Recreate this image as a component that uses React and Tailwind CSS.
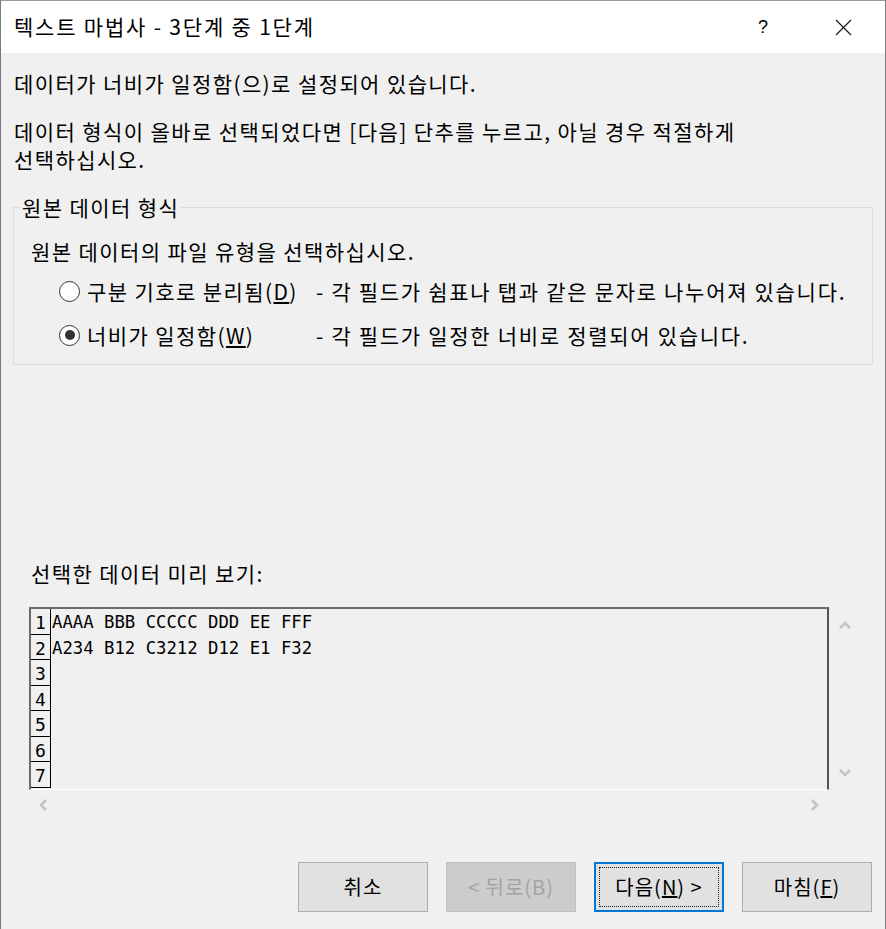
import React from 'react';

// Text Import Wizard - step 1 of 3

const KR = { fontFamily: '"Noto Sans CJK KR", "Noto Sans", sans-serif' };

function Radio({ checked }) {
  return (
    <span className="w-[21px] h-[21px] rounded-full border-[1.5px] border-[#333] bg-white flex items-center justify-center shrink-0">
      {checked && <span className="w-[10px] h-[10px] rounded-full bg-[#333]" />}
    </span>
  );
}

function Chevron({ dir }) {
  const paths = {
    up: 'M2 9 L7 4 L12 9',
    down: 'M2 4 L7 9 L12 4',
    left: 'M9 2 L4 7 L9 12',
    right: 'M5 2 L10 7 L5 12',
  };
  return (
    <svg width="14" height="14" viewBox="0 0 14 14">
      <path d={paths[dir]} fill="none" stroke="#c4c4c4" strokeWidth="2.6" />
    </svg>
  );
}

function Btn({ children, disabled, focused }) {
  if (focused) {
    return (
      <button className="w-[130px] h-[50px] border-2 border-[#0078d7] bg-[#e1e1e1] p-[3px] text-[20px] tracking-[1px] text-black">
        <span className="w-full h-full flex items-center justify-center border border-dotted border-[#222]">
          {children}
        </span>
      </button>
    );
  }
  return (
    <button
      className={
        disabled
          ? 'w-[130px] h-[50px] border border-[#bfbfbf] bg-[#cccccc] text-[20px] tracking-[1px] text-[#a3a3a3]'
          : 'w-[130px] h-[50px] border border-[#adadad] bg-[#e1e1e1] text-[20px] tracking-[1px] text-black'
      }
    >
      {children}
    </button>
  );
}

const rows = ['AAAA BBB CCCCC DDD EE FFF', 'A234 B12 C3212 D12 E1 F32', '', '', '', '', ''];

export default function App() {
  return (
    <div
      className="w-[886px] h-[929px] bg-[#f0f0f0] border-x border-[#7a7a7a] flex flex-col text-black"
      style={KR}
    >
      {/* title bar */}
      <div className="h-[53px] bg-white border-t border-[#9a9a9a] flex items-center pl-[13px] shrink-0">
        <span className="text-[21px] tracking-[1.8px]">텍스트 마법사 - 3단계 중 1단계</span>
        <span className="ml-auto text-[18px] mr-[67px]" style={{ fontFamily: '"Liberation Sans", sans-serif' }}>?</span>
        <svg width="17" height="17" viewBox="0 0 17 17" className="mr-[33px]">
          <path d="M1 1 L16 16 M16 1 L1 16" stroke="#111" strokeWidth="1.1" />
        </svg>
      </div>

      {/* intro text */}
      <div className="pl-[13px] pt-[16px] text-[21px] tracking-[1.4px] leading-[28px]">
        <p>데이터가 너비가 일정함(으)로 설정되어 있습니다.</p>
        <p className="mt-[20px]">
          데이터 형식이 올바로 선택되었다면 [다음] 단추를 누르고, 아닐 경우 적절하게
          <br />
          선택하십시오.
        </p>
      </div>

      {/* group box */}
      <fieldset className="mx-[12px] mt-[22px] h-[170px] border border-[#dcdcdc] pl-[17px] pr-0 pb-0 pt-0 text-[21px] tracking-[1.4px]">
        <legend className="px-[1px] ml-[-10px] leading-[24px]">원본 데이터 형식</legend>
        <p className="leading-[28px] mt-[18px]">원본 데이터의 파일 유형을 선택하십시오.</p>
        <div className="mt-[13px] flex flex-col gap-[18px] pl-[28px] leading-[26px]">
          <div className="flex items-center">
            <Radio />
            <span className="ml-[7px] w-[229px]">
              구분 기호로 분리됨(<u>D</u>)
            </span>
            <span className="tracking-[1.7px]">- 각 필드가 쉼표나 탭과 같은 문자로 나누어져 있습니다.</span>
          </div>
          <div className="flex items-center">
            <Radio checked />
            <span className="ml-[7px] w-[229px]">
              너비가 일정함(<u>W</u>)
            </span>
            <span className="tracking-[1.7px]">- 각 필드가 일정한 너비로 정렬되어 있습니다.</span>
          </div>
        </div>
      </fieldset>

      {/* preview */}
      <p className="pl-[30px] mt-[194px] text-[21px] tracking-[1.4px] leading-[28px]">선택한 데이터 미리 보기:</p>
      <div className="flex mt-[20px] pl-[28px]">
        <div className="flex flex-col">
          <div className="w-[800px] h-[183px] border-t-2 border-l-2 border-r-2 border-b border-t-[#6b6b6b] border-l-[#6b6b6b] border-r-[#555] border-b-white flex overflow-hidden">
            <div className="flex flex-col" style={{ fontFamily: '"DejaVu Sans Mono", monospace' }}>
              {rows.map((r, i) => (
                <div key={i} className="flex h-[25.5px]">
                  <span className="w-[20px] border-r-[1.5px] border-b-[1.5px] border-black text-[18px] leading-[28px] text-center shrink-0">
                    {i + 1}
                  </span>
                  <span className="text-[17.3px] leading-[27px] pl-[1px] whitespace-pre">{r}</span>
                </div>
              ))}
            </div>
          </div>
          <div className="flex justify-between items-center h-[30px] pl-[8px] pr-[8px]">
            <Chevron dir="left" />
            <Chevron dir="right" />
          </div>
        </div>
        <div className="flex flex-col justify-between h-[183px] pt-[12px] pb-[10px] pl-[9px]">
          <Chevron dir="up" />
          <Chevron dir="down" />
        </div>
      </div>

      {/* buttons */}
      <div className="flex justify-end gap-[18px] pr-[13px] mt-[42px]">
        <Btn>취소</Btn>
        <Btn disabled>&lt; 뒤로(B)</Btn>
        <Btn focused>
          다음(<u>N</u>) &gt;
        </Btn>
        <Btn>
          마침(<u>F</u>)
        </Btn>
      </div>
    </div>
  );
}
